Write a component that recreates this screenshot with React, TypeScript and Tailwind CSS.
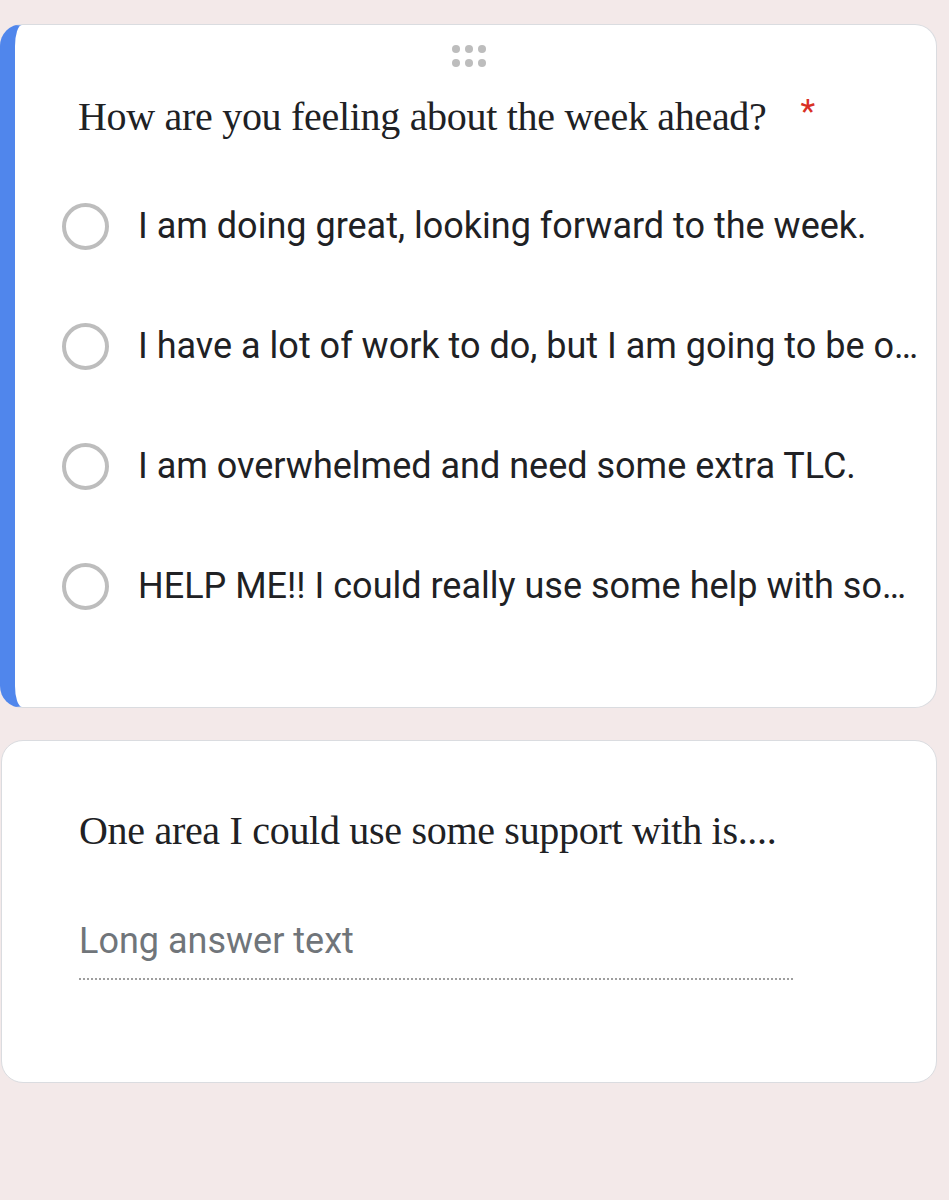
import React from "react";

const options = [
  "I am doing great, looking forward to the week.",
  "I have a lot of work to do, but I am going to be o…",
  "I am overwhelmed and need some extra TLC.",
  "HELP ME!! I could really use some help with so…",
];

function DragHandle() {
  return (
    <div className="ml-[437px] grid w-fit grid-cols-3 gap-x-[5px] gap-y-[6px]">
      {Array.from({ length: 6 }).map((_, i) => (
        <span key={i} className="block h-[8px] w-[8px] rounded-full bg-[#bdbdbd]" />
      ))}
    </div>
  );
}

export default function App() {
  return (
    <div className="min-h-[1200px] bg-[#f3e9e9] pt-6 font-['Roboto',sans-serif]">
      {/* multiple choice question */}
      <div className="h-[684px] w-[937px] rounded-[22px] border border-[#dadce0] border-l-[15px] border-l-[#5086ec] bg-white pt-[20px]">
        <DragHandle />
        <div className="mt-[26px] flex items-start pl-[63px]">
          <h2 className="font-['Liberation_Serif',serif] text-[40px] leading-[48px] tracking-[-0.3px] text-[#202124]">
            How are you feeling about the week ahead?
          </h2>
          <span className="ml-[34px] -mt-[2px] text-[34px] leading-[40px] text-[#d93025]">*</span>
        </div>
        <div className="mt-[25px] flex flex-col">
          {options.map((o) => (
            <div key={o} className="flex h-[120px] items-center pl-[47px] pr-[12px]">
              <span className="h-[47px] w-[47px] shrink-0 rounded-full border-[4px] border-[#bdbdbd]" />
              <span className="ml-[29px] whitespace-nowrap text-[36px] text-[#202124]">{o}</span>
            </div>
          ))}
        </div>
      </div>

      {/* long answer question */}
      <div className="mt-[32px] ml-[1px] h-[343px] w-[936px] rounded-[22px] border border-[#dadce0] bg-white pl-[77px] pt-[66px]">
        <h2 className="font-['Liberation_Serif',serif] text-[40px] leading-[48px] tracking-[-0.3px] text-[#202124]">
          One area I could use some support with is....
        </h2>
        <p className="mt-[64px] text-[36px] leading-[44px] text-[#70757a]">Long answer text</p>
        <div className="mt-[15px] w-[714px] border-b-[2px] border-dotted border-[#9e9e9e]" />
      </div>
    </div>
  );
}
